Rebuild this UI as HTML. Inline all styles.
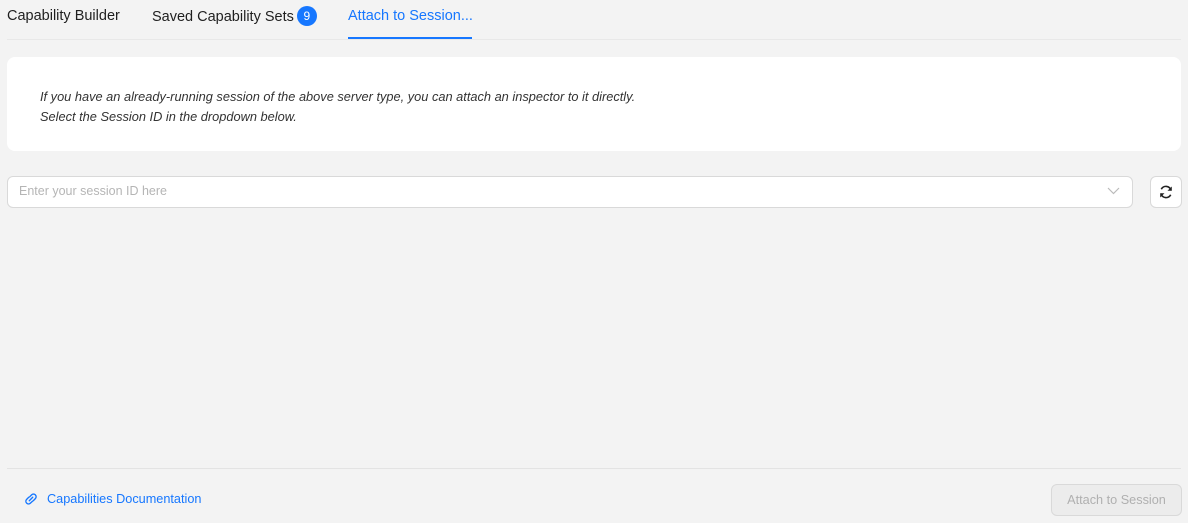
<!DOCTYPE html>
<html><head><style>
body{margin:0;width:1188px;height:523px;background:#f3f3f3;font-family:"Liberation Sans",sans-serif;position:relative;overflow:hidden}
.tab{position:absolute;top:8px;font-size:14.5px;color:#1f1f1f}
.badge{display:inline-block;width:20px;height:20px;border-radius:10px;background:#1677ff;color:#fff;font-size:12px;text-align:center;line-height:20px;vertical-align:1px;margin-left:3px}
</style></head><body>
<div class="tab" style="left:7px">Capability Builder</div>
<div class="tab" style="left:152px;top:6px">Saved Capability Sets<span class="badge">9</span></div>
<div class="tab" style="left:348px;color:#1677ff">Attach to Session...</div>
<div style="position:absolute;left:348px;top:37px;width:124px;height:2px;background:#1677ff"></div>
<div style="position:absolute;left:7px;right:7px;top:39px;height:1px;background:#e8e8e8"></div>
<div style="position:absolute;left:7px;top:57px;width:1174px;height:94px;background:#fff;border-radius:8px"></div>
<div style="position:absolute;left:40px;top:87px;font-size:12.8px;font-style:italic;color:#333;line-height:20px">If you have an already-running session of the above server type, you can attach an inspector to it directly.<br>Select the Session ID in the dropdown below.</div>
<div style="position:absolute;left:7px;top:176px;width:1124px;height:30px;background:#fff;border:1px solid #d9d9d9;border-radius:6px"></div>
<div style="position:absolute;left:19px;top:184px;font-size:12.5px;color:#b5b5b5">Enter your session ID here</div>
<svg style="position:absolute;left:1107px;top:186px" width="13" height="10" viewBox="0 0 13 10"><path d="M1 2l5.5 5.5L12 2" fill="none" stroke="#bbb" stroke-width="1.2"/></svg>
<div style="position:absolute;left:1150px;top:176px;width:30px;height:30px;background:#fff;border:1px solid #d9d9d9;border-radius:6px"></div>
<svg style="position:absolute;left:1158px;top:184px" width="16" height="16" viewBox="0 0 16 16"><path d="M13 6.5A5.2 5.2 0 0 0 3.3 5.2M3 9.5a5.2 5.2 0 0 0 9.7 1.3" fill="none" stroke="#222" stroke-width="1.6"/><path d="M13.8 2.5v4.3H9.5z M2.2 13.5V9.2h4.3z" fill="#222"/></svg>
<div style="position:absolute;left:7px;right:7px;top:468px;height:1px;background:#e3e3e3"></div>
<svg style="position:absolute;left:23px;top:491px" width="16" height="16" viewBox="0 0 14 14"><path d="M5.5 8.5l3-3M5 5.5L3.2 7.3a2.3 2.3 0 0 0 3.3 3.3L8.3 9M9 8.5l1.8-1.8a2.3 2.3 0 0 0-3.3-3.3L5.7 5.2" fill="none" stroke="#1677ff" stroke-width="1.2" stroke-linecap="round"/></svg>
<div style="position:absolute;left:47px;top:492px;font-size:12.7px;color:#1677ff">Capabilities Documentation</div>
<div style="position:absolute;left:1051px;top:484px;width:129px;height:30px;background:#ececec;border:1px solid #d9d9d9;border-radius:6px;font-size:12.7px;color:#b0b0b0;text-align:center;line-height:30px">Attach to Session</div>
</body></html>
